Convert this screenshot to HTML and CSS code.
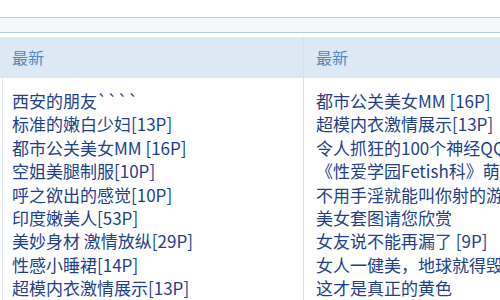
FILE: index.html
```html
<!DOCTYPE html>
<html lang="zh-CN">
<head>
<meta charset="utf-8">
<title>最新</title>
<link rel="stylesheet" href="styles.css">
</head>
<body>
<div class="top"></div>
<div class="bar"></div>
<div class="cols">
  <div class="col col-left">
    <div class="head">最新</div>
    <ul class="list">
      <li>西安的朋友````</li>
      <li>标准的嫩白少妇[13P]</li>
      <li>都市公关美女MM [16P]</li>
      <li>空姐美腿制服[10P]</li>
      <li>呼之欲出的感觉[10P]</li>
      <li>印度嫩美人[53P]</li>
      <li>美妙身材 激情放纵[29P]</li>
      <li>性感小睡裙[14P]</li>
      <li>超模内衣激情展示[13P]</li>
    </ul>
  </div>
  <div class="col col-right">
    <div class="head">最新</div>
    <ul class="list">
      <li>都市公关美女MM [16P]</li>
      <li>超模内衣激情展示[13P]</li>
      <li>令人抓狂的100个神经QQ表情</li>
      <li>《性爱学园Fetish科》萌系</li>
      <li>不用手淫就能叫你射的游戏</li>
      <li>美女套图请您欣赏</li>
      <li>女友说不能再漏了 [9P]</li>
      <li>女人一健美，地球就得毁灭</li>
      <li>这才是真正的黄色</li>
    </ul>
  </div>
</div>
</body>
</html>
```

FILE: styles.css
```css
html, body {
  margin: 0;
  padding: 0;
  background: #ffffff;
  overflow: hidden;
}
body {
  width: 500px;
  height: 300px;
  font-family: "Noto Sans CJK SC", "Noto Sans", sans-serif;
}
.top {
  height: 17px;
  border-bottom: 1px solid #b8cfe2;
}
.bar {
  height: 14px;
  background: #f5f8fb;
  border-bottom: 1px solid #b4cde2;
}
.cols {
  display: flex;
  margin-top: 4px;
}
.col {
  overflow: hidden;
}
.col-left {
  width: 303px;
  flex: none;
}
.col-right {
  flex: 1;
  min-width: 0;
  border-left: 1px solid #d3e0eb;
}
.head {
  height: 41px;
  line-height: 41px;
  background: #dce9f5;
  color: #4f8bc2;
  font-size: 16px;
  padding-left: 12px;
}
.list {
  list-style: none;
  margin: 0;
  padding: 11px 0 0 12px;
  font-size: 17px;
  line-height: 23.4px;
  color: #233f8c;
  white-space: nowrap;
}
.col-left .list {
  border-left: 1px solid #e2ebf2;
  margin-left: 2px;
  padding-left: 9px;
}
```
